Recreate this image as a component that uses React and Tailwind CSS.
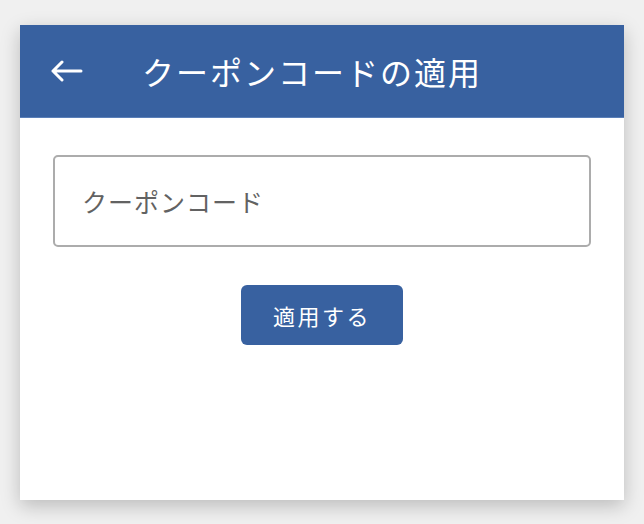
import React from 'react'

const jp = { fontFamily: '"Noto Sans CJK JP", "Noto Sans", sans-serif' }

function BackArrow() {
  return (
    <svg width="34" height="22" viewBox="0 0 34 22" fill="none">
      <path d="M3 11H31M3 11L12 2M3 11L12 20" stroke="white" strokeWidth="3" strokeLinecap="round" strokeLinejoin="round" />
    </svg>
  )
}

export default function App() {
  return (
    <div className="w-[644px] h-[524px] bg-[#f0f0f0] pt-[25px] px-[20px]" style={jp}>
      <div className="w-[604px] h-[475px] bg-white shadow-[0_6px_18px_rgba(0,0,0,0.22)] flex flex-col">
        {/* header */}
        <div className="h-[93px] bg-[#3861a0] flex items-center pl-[30px] border-b border-[#5a7fb8]">
          <BackArrow />
          <h1 className="ml-[58px] text-white text-[32px] tracking-[2px] leading-none">クーポンコードの適用</h1>
        </div>

        <div className="px-[33px] pt-[37px] flex flex-col items-center">
          <div className="w-full h-[92px] rounded-[5px] border-2 border-[#acacac] flex items-center px-[27px]">
            <span className="text-[25px] tracking-[1px] text-[#626262] leading-none">クーポンコード</span>
          </div>

          <button className="mt-[38px] w-[162px] h-[60px] rounded-[6px] bg-[#3861a0] text-white text-[22px] tracking-[2.5px] flex items-center justify-center">
            適用する
          </button>
        </div>
      </div>
    </div>
  )
}
